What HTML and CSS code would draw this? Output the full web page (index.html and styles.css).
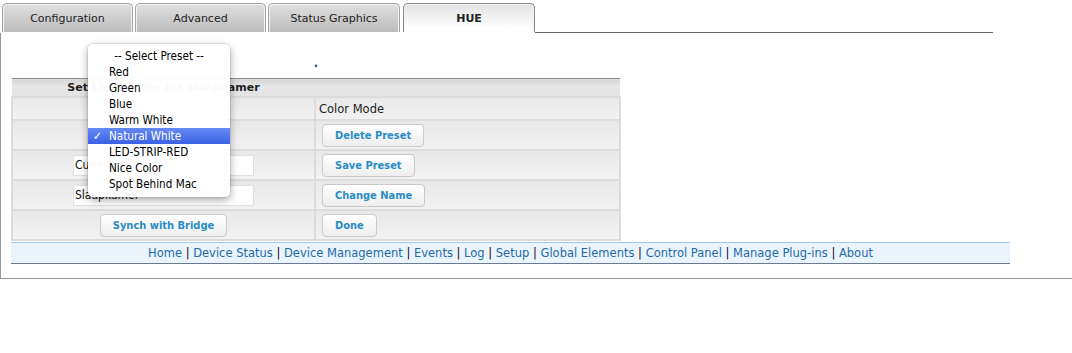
FILE: index.html
```html
<!DOCTYPE html>
<html lang="en">
<head>
  <meta charset="UTF-8" />
  <title>HUE</title>
  <link rel="stylesheet" href="styles.css">
</head>
<body>
<div class="page">

  <div class="tabbar">
    <div class="tab">Configuration</div>
    <div class="tab">Advanced</div>
    <div class="tab wide">Status Graphics</div>
    <div class="tab wide active">HUE</div>
    <div class="tab-fill"></div>
  </div>

  <div class="panel">
    <div class="status-dot">.</div>

    <table class="hue-table">
      <tr class="head">
        <th>Set Light State for Slaapkamer</th>
        <th></th>
      </tr>
      <tr class="short">
        <td></td>
        <td class="label">Color Mode</td>
      </tr>
      <tr>
        <td></td>
        <td class="right"><button class="btn">Delete Preset</button></td>
      </tr>
      <tr>
        <td class="center"><input class="field" type="text" value="Current"></td>
        <td class="right"><button class="btn">Save Preset</button></td>
      </tr>
      <tr>
        <td class="center"><input class="field" type="text" value="Slaapkamer"></td>
        <td class="right"><button class="btn">Change Name</button></td>
      </tr>
      <tr>
        <td class="center"><button class="btn">Synch with Bridge</button></td>
        <td class="right"><button class="btn">Done</button></td>
      </tr>
    </table>

    <div class="footer">
      <a href="#">Home</a> <span class="sep">|</span>
      <a href="#">Device Status</a> <span class="sep">|</span>
      <a href="#">Device Management</a> <span class="sep">|</span>
      <a href="#">Events</a> <span class="sep">|</span>
      <a href="#">Log</a> <span class="sep">|</span>
      <a href="#">Setup</a> <span class="sep">|</span>
      <a href="#">Global Elements</a> <span class="sep">|</span>
      <a href="#">Control Panel</a> <span class="sep">|</span>
      <a href="#">Manage Plug-ins</a> <span class="sep">|</span>
      <a href="#">About</a>
    </div>
  </div>

  <!-- open preset popup -->
  <div class="menu">
    <div class="menu-item title">-- Select Preset --</div>
    <div class="menu-item">Red</div>
    <div class="menu-item">Green</div>
    <div class="menu-item">Blue</div>
    <div class="menu-item">Warm White</div>
    <div class="menu-item selected"><span class="check">✓</span>Natural White</div>
    <div class="menu-item">LED-STRIP-RED</div>
    <div class="menu-item">Nice Color</div>
    <div class="menu-item">Spot Behind Mac</div>
  </div>

</div>
</body>
</html>
```

FILE: styles.css
```css
body {
  margin: 0;
  font-family: "DejaVu Sans", Verdana, sans-serif;
  font-size: 11.5px;
  color: #222;
  background-color: #fff;
}

.page {
  position: relative;
}

/* tabs */
.tabbar {
  display: flex;
  width: 993px;
  height: 33px;
  padding: 3px 0 0 2px;
  box-sizing: border-box;
}

.tab {
  width: 131px;
  height: 29px;
  margin-right: 2px;
  box-sizing: border-box;
  border: 1px solid #a3a3a3;
  border-bottom: none;
  border-radius: 5px 5px 0 0;
  background: linear-gradient(#e0e0e0, #bcbcbc);
  box-shadow: inset 1px 1px 0 #f2f2f2, inset -1px 0 0 #f2f2f2;
  text-align: center;
  line-height: 29px;
  font-size: 11px;
  color: #222;
}

.tab.wide {
  width: 132px;
  margin-right: 3px;
}

.tab.active {
  margin-right: 0;
  border-color: #8a8a8a;
  background: linear-gradient(#e2e2e2, #ffffff 85%);
  font-weight: bold;
}

.tab-fill {
  flex: 1;
  border-bottom: 1px solid #666;
}

/* content */
.panel {
  border-left: 1px solid #999;
  border-bottom: 1px solid #999;
  padding: 0 0 14px 10px;
}

.status-dot {
  width: 610px;
  height: 45px;
  box-sizing: border-box;
  padding-top: 24px;
  line-height: 13px;
  text-align: center;
  font-weight: bold;
  color: #1d4f94;
}

.hue-table {
  width: 610px;
  border-collapse: collapse;
}

.hue-table th {
  height: 17px;
  padding: 0;
  border-top: 1px solid #8a8a8a;
  background: linear-gradient(#d6d6d6, #e6e6e6 40%, #e3e3e3);
  font-size: 11px;
  font-weight: bold;
  text-align: center;
}

.hue-table th:first-child {
  width: 303px;
}

.hue-table td {
  height: 28px;
  padding: 0;
  border: 2px solid #dcdcdc;
  background: linear-gradient(#e8e8e8, #f2f2f2);
}

.hue-table tr.short td {
  height: 21px;
}

.hue-table td.label {
  padding-left: 3px;
}

.hue-table td.right {
  padding-left: 6px;
}

.hue-table td.center {
  text-align: center;
}

.btn {
  height: 23px;
  padding: 0 12px;
  border: 1px solid #c9c9c9;
  border-radius: 4px;
  background: linear-gradient(#ffffff, #eeeeee);
  color: #2a8cc6;
  font-family: "DejaVu Sans Condensed", "DejaVu Sans", sans-serif;
  font-size: 11px;
  font-weight: bold;
  vertical-align: middle;
}

.field {
  width: 181px;
  height: 21px;
  box-sizing: border-box;
  padding: 0 1px;
  border: 1px solid #e0e0e0;
  background-color: #fff;
  font-family: "DejaVu Sans Condensed", "DejaVu Sans", sans-serif;
  font-size: 12px;
  color: #111;
  vertical-align: middle;
}

.footer {
  width: 999px;
  height: 22px;
  box-sizing: border-box;
  margin-top: 1px;
  border-top: 1px solid #9ccaf0;
  border-bottom: 1px solid #6b7a8e;
  background-color: #eaf4fd;
  text-align: center;
  line-height: 20px;
}

.footer a {
  color: #1f6aa6;
  text-decoration: none;
}

.footer .sep {
  color: #2a0018;
}

/* popup list */
.menu {
  position: absolute;
  left: 88px;
  top: 44px;
  width: 142px;
  padding: 4px 0 5px;
  border-radius: 5px;
  background-color: rgba(255, 255, 255, 0.97);
  box-shadow: 0 3px 9px rgba(0, 0, 0, 0.35), 0 0 0 1px rgba(0, 0, 0, 0.08);
  font-family: "DejaVu Sans Condensed", "DejaVu Sans", sans-serif;
  font-size: 11.6px;
  color: #000;
}

.menu-item {
  position: relative;
  height: 16px;
  line-height: 16px;
  padding-left: 21px;
}

.menu-item.title {
  padding-left: 0;
  text-align: center;
}

.menu-item.selected {
  background: linear-gradient(#658af3, #3b62e5);
  color: #fff;
}

.check {
  position: absolute;
  left: 5px;
}
```
